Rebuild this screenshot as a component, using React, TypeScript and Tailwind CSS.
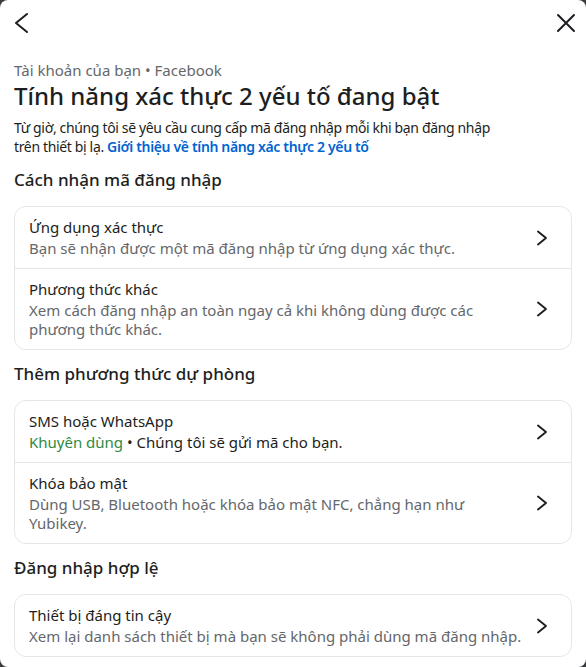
type Item = { title: string; sub: React.ReactNode };

const sections: { heading: string; items: Item[] }[] = [
  {
    heading: "Cách nhận mã đăng nhập",
    items: [
      { title: "Ứng dụng xác thực", sub: "Bạn sẽ nhận được một mã đăng nhập từ ứng dụng xác thực." },
      { title: "Phương thức khác", sub: "Xem cách đăng nhập an toàn ngay cả khi không dùng được các phương thức khác." },
    ],
  },
  {
    heading: "Thêm phương thức dự phòng",
    items: [
      {
        title: "SMS hoặc WhatsApp",
        sub: (
          <>
            <span className="text-[#2f8a43]">Khuyên dùng</span>
            <span className="text-[#1c1e21]"> • Chúng tôi sẽ gửi mã cho bạn.</span>
          </>
        ),
      },
      { title: "Khóa bảo mật", sub: "Dùng USB, Bluetooth hoặc khóa bảo mật NFC, chẳng hạn như Yubikey." },
    ],
  },
  {
    heading: "Đăng nhập hợp lệ",
    items: [
      { title: "Thiết bị đáng tin cậy", sub: "Xem lại danh sách thiết bị mà bạn sẽ không phải dùng mã đăng nhập." },
    ],
  },
];

function RowChevron() {
  return (
    <svg width="12" height="16" viewBox="0 0 12 16" fill="none" className="shrink-0">
      <polyline points="2,1.5 10,8 2,14.5" stroke="#1c1e21" strokeWidth="1.9" strokeLinecap="round" strokeLinejoin="round" />
    </svg>
  );
}

export default function App() {
  return (
    <div className="min-h-screen w-full bg-[#3a3b3c]">
      <div
        className="h-[667px] w-[586px] overflow-hidden rounded-[8px] bg-white text-[#1c1e21]"
        style={{ fontFamily: '"Segoe UI", "Noto Sans", sans-serif' }}
      >
        <div className="flex h-[46px] items-center justify-between pl-[13px] pr-[10px]">
          <svg width="16" height="22" viewBox="0 0 16 22" fill="none">
            <polyline points="14,2 3,11 14,20" stroke="#1c1e21" strokeWidth="2" strokeLinecap="round" strokeLinejoin="round" />
          </svg>
          <svg width="20" height="20" viewBox="0 0 20 20" fill="none">
            <path d="M2 2 L18 18 M18 2 L2 18" stroke="#1c1e21" strokeWidth="2" strokeLinecap="round" />
          </svg>
        </div>

        <div className="px-[14px]">
          <div className="pt-[13px] text-[15px] leading-[22px] text-[#65676b]">Tài khoản của bạn • Facebook</div>
          <h1 className="text-[24px] leading-[30px] font-medium">Tính năng xác thực 2 yếu tố đang bật</h1>
          <p className="mt-[7px] pr-[70px] text-[14px] leading-[19px] tracking-[-0.35px]">
            Từ giờ, chúng tôi sẽ yêu cầu cung cấp mã đăng nhập mỗi khi bạn đăng nhập trên thiết bị lạ.{" "}
            <span className="font-semibold text-[#0064d1]">Giới thiệu về tính năng xác thực 2 yếu tố</span>
          </p>

          {sections.map((s) => (
            <div key={s.heading}>
              <div className="pt-[12px] pb-[14px] text-[17px] leading-[24px] font-medium">{s.heading}</div>
              <div className="overflow-hidden rounded-[12px] border border-[#e4e6eb]">
                {s.items.map((it, i) => (
                  <div
                    key={it.title}
                    className={`flex items-center pl-[14px] pr-[23px] py-[10px] ${i > 0 ? "border-t border-[#e4e6eb]" : ""}`}
                  >
                    <div className="min-w-0 flex-1 pr-[12px]">
                      <div className="text-[15px] leading-[20px]">{it.title}</div>
                      <div className="mt-[2px] text-[15px] leading-[19px] text-[#65676b]">{it.sub}</div>
                    </div>
                    <RowChevron />
                  </div>
                ))}
              </div>
            </div>
          ))}
        </div>
      </div>
    </div>
  );
}
